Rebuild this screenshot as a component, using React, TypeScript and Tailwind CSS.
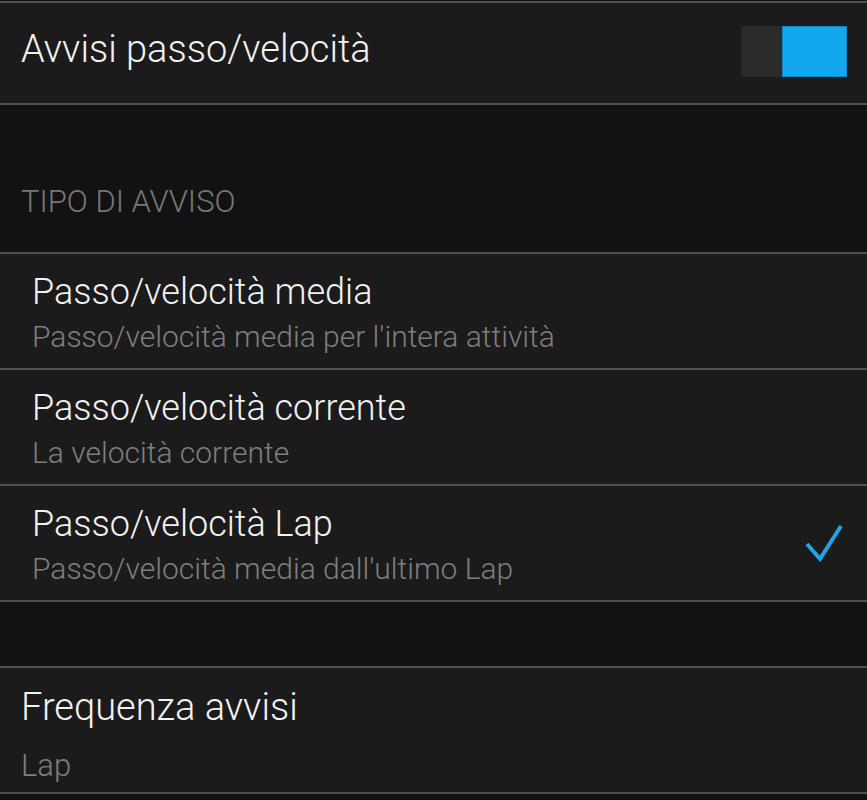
import React from "react";

const Line = () => <div className="h-[2px] bg-[#505050]" />;

function Item({ title, sub, checked }: { title: string; sub: string; checked?: boolean }) {
  return (
    <div className="relative h-[114px] bg-[#1b1b1b] pl-[32px] pt-[18px]">
      <div className="text-[36px] leading-[40px] text-[#f2f2f2]">{title}</div>
      <div className="mt-[5px] text-[30px] leading-[40px] text-[#7e7e7e]">{sub}</div>
      {checked && (
        <svg className="absolute left-[800px] top-[33px]" width="50" height="50" viewBox="0 0 50 50">
          <polyline
            points="7,25 20,40 41,7"
            fill="none"
            stroke="#1ea5e6"
            strokeWidth="4"
            strokeLinecap="butt"
            strokeLinejoin="miter"
          />
        </svg>
      )}
    </div>
  );
}

export default function App() {
  return (
    <div
      className="min-h-[800px] w-[867px] bg-[#121212] font-light"
      style={{ fontFamily: "Roboto, 'Noto Sans', sans-serif" }}
    >
      <div className="h-[1px]" />
      <Line />
      <div className="flex h-[100px] items-start justify-between bg-[#1b1b1b] pl-[21px] pr-[20px] pt-[26px]">
        <div className="text-[38px] leading-[40px] text-[#f2f2f2]">Avvisi passo/velocità</div>
        <div className="-mt-[3px] flex h-[51px]">
          <div className="w-[41px] bg-[#2a2a2a]" />
          <div className="w-[65px] border border-[#0d87c2] bg-[#12a8ee]" />
        </div>
      </div>
      <Line />
      <div className="h-[147px] pl-[21px] pt-[77px]">
        <div className="text-[31px] leading-[40px] text-[#777777]">TIPO DI AVVISO</div>
      </div>
      <Line />
      <Item title="Passo/velocità media" sub="Passo/velocità media per l'intera attività" />
      <Line />
      <Item title="Passo/velocità corrente" sub="La velocità corrente" />
      <Line />
      <Item title="Passo/velocità Lap" sub="Passo/velocità media dall'ultimo Lap" checked />
      <Line />
      <div className="h-[64px]" />
      <Line />
      <div className="h-[124px] bg-[#1b1b1b] pl-[21px] pt-[19px]">
        <div className="text-[38px] leading-[40px] text-[#f2f2f2]">Frequenza avvisi</div>
        <div className="mt-[19px] text-[31px] leading-[40px] text-[#7e7e7e]">Lap</div>
      </div>
      <Line />
    </div>
  );
}
